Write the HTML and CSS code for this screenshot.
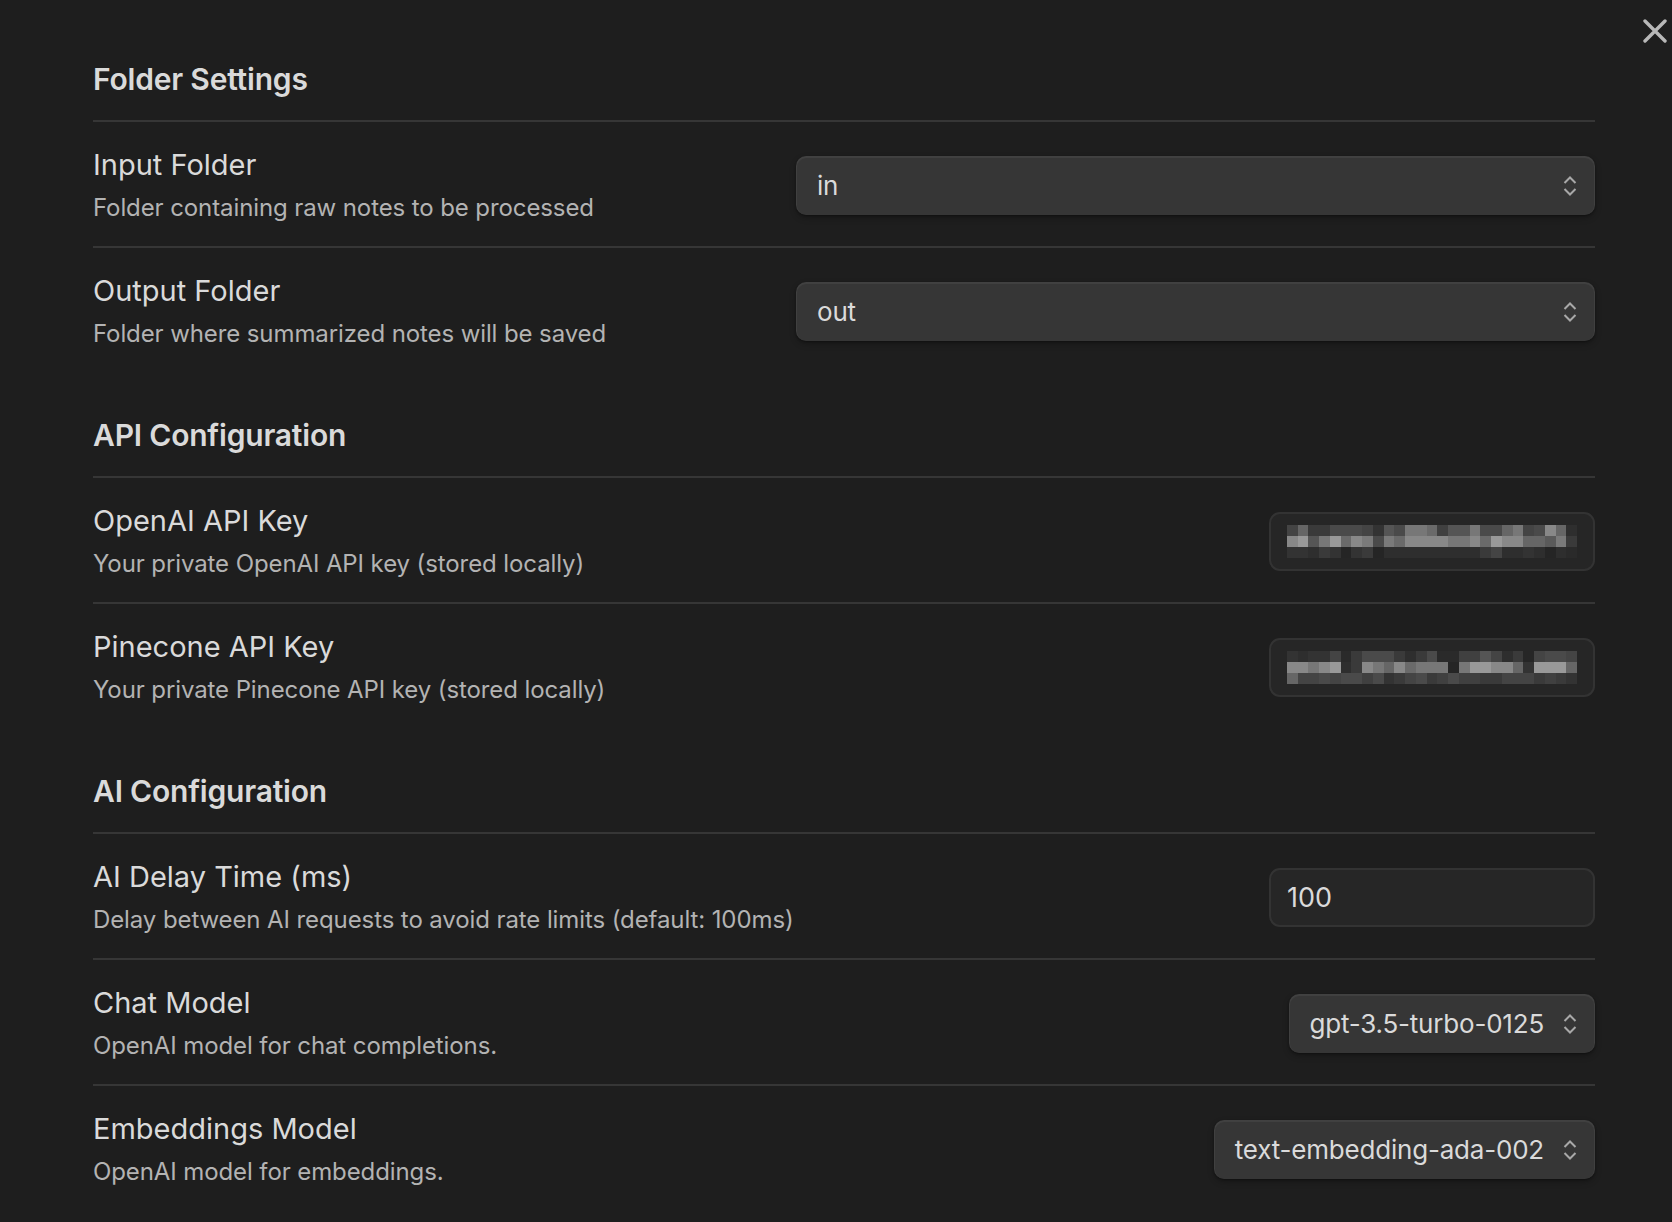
FILE: index.html
```html
<!DOCTYPE html>
<html lang="en">
<head>
<meta charset="utf-8">
<title>Settings</title>
<link rel="stylesheet" href="styles.css">
</head>
<body>
<div class="modal">
  <button class="close" aria-label="Close">
    <svg width="24" height="24" viewBox="0 0 24 24" fill="none" stroke="#b8b8b8" stroke-width="3.4" stroke-linecap="round"><path d="M2 2 L22 22 M22 2 L2 22"/></svg>
  </button>
  <div class="content">
    <div class="heading">Folder Settings</div>
    <div class="item">
      <div class="info"><div class="name">Input Folder</div><div class="desc">Folder containing raw notes to be processed</div></div>
      <div class="dropdown wide"><span>in</span><svg class="chev" width="14" height="22" viewBox="0 0 14 22" fill="none" stroke="#a8a8a8" stroke-width="2"><path d="M1.5 8 L7 2.5 L12.5 8 M1.5 14 L7 19.5 L12.5 14"/></svg></div>
    </div>
    <div class="item">
      <div class="info"><div class="name">Output Folder</div><div class="desc">Folder where summarized notes will be saved</div></div>
      <div class="dropdown wide"><span>out</span><svg class="chev" width="14" height="22" viewBox="0 0 14 22" fill="none" stroke="#a8a8a8" stroke-width="2"><path d="M1.5 8 L7 2.5 L12.5 8 M1.5 14 L7 19.5 L12.5 14"/></svg></div>
    </div>

    <div class="heading">API Configuration</div>
    <div class="item">
      <div class="info"><div class="name">OpenAI API Key</div><div class="desc">Your private OpenAI API key (stored locally)</div></div>
      <div class="textbox masked">
        <svg width="297" height="33" viewBox="0 0 27 3" shape-rendering="crispEdges">
          <g>
            <rect x="0" y="0" width="1" height="1" fill="#444"/><rect x="1" y="0" width="1" height="1" fill="#666"/><rect x="2" y="0" width="1" height="1" fill="#3a3a3a"/><rect x="3" y="0" width="1" height="1" fill="#3a3a3a"/><rect x="4" y="0" width="1" height="1" fill="#4a4a4a"/><rect x="5" y="0" width="1" height="1" fill="#4a4a4a"/><rect x="6" y="0" width="1" height="1" fill="#4a4a4a"/><rect x="7" y="0" width="1" height="1" fill="#444"/><rect x="8" y="0" width="1" height="1" fill="#333"/><rect x="9" y="0" width="1" height="1" fill="#555"/><rect x="10" y="0" width="1" height="1" fill="#4a4a4a"/><rect x="11" y="0" width="1" height="1" fill="#777"/><rect x="12" y="0" width="1" height="1" fill="#777"/><rect x="13" y="0" width="1" height="1" fill="#6a6a6a"/><rect x="14" y="0" width="1" height="1" fill="#404040"/><rect x="15" y="0" width="1" height="1" fill="#555"/><rect x="16" y="0" width="1" height="1" fill="#555"/><rect x="17" y="0" width="1" height="1" fill="#777"/><rect x="18" y="0" width="1" height="1" fill="#4a4a4a"/><rect x="19" y="0" width="1" height="1" fill="#4a4a4a"/><rect x="20" y="0" width="1" height="1" fill="#666"/><rect x="21" y="0" width="1" height="1" fill="#777"/><rect x="22" y="0" width="1" height="1" fill="#444"/><rect x="23" y="0" width="1" height="1" fill="#4a4a4a"/><rect x="24" y="0" width="1" height="1" fill="#888"/><rect x="25" y="0" width="1" height="1" fill="#666"/><rect x="26" y="0" width="1" height="1" fill="#2e2e2e"/>
            <rect x="0" y="1" width="1" height="1" fill="#888"/><rect x="1" y="1" width="1" height="1" fill="#999"/><rect x="2" y="1" width="1" height="1" fill="#555"/><rect x="3" y="1" width="1" height="1" fill="#777"/><rect x="4" y="1" width="1" height="1" fill="#999"/><rect x="5" y="1" width="1" height="1" fill="#6a6a6a"/><rect x="6" y="1" width="1" height="1" fill="#888"/><rect x="7" y="1" width="1" height="1" fill="#7a7a7a"/><rect x="8" y="1" width="1" height="1" fill="#4a4a4a"/><rect x="9" y="1" width="1" height="1" fill="#7a7a7a"/><rect x="10" y="1" width="1" height="1" fill="#6a6a6a"/><rect x="11" y="1" width="1" height="1" fill="#888"/><rect x="12" y="1" width="1" height="1" fill="#888"/><rect x="13" y="1" width="1" height="1" fill="#888"/><rect x="14" y="1" width="1" height="1" fill="#888"/><rect x="15" y="1" width="1" height="1" fill="#777"/><rect x="16" y="1" width="1" height="1" fill="#777"/><rect x="17" y="1" width="1" height="1" fill="#888"/><rect x="18" y="1" width="1" height="1" fill="#6a6a6a"/><rect x="19" y="1" width="1" height="1" fill="#999"/><rect x="20" y="1" width="1" height="1" fill="#888"/><rect x="21" y="1" width="1" height="1" fill="#888"/><rect x="22" y="1" width="1" height="1" fill="#666"/><rect x="23" y="1" width="1" height="1" fill="#666"/><rect x="24" y="1" width="1" height="1" fill="#5a5a5a"/><rect x="25" y="1" width="1" height="1" fill="#7a7a7a"/><rect x="26" y="1" width="1" height="1" fill="#3a3a3a"/>
            <rect x="0" y="2" width="1" height="1" fill="#333"/><rect x="1" y="2" width="1" height="1" fill="#333"/><rect x="2" y="2" width="1" height="1" fill="#2e2e2e"/><rect x="3" y="2" width="1" height="1" fill="#3a3a3a"/><rect x="4" y="2" width="1" height="1" fill="#333"/><rect x="5" y="2" width="1" height="1" fill="#252525"/><rect x="6" y="2" width="1" height="1" fill="#333"/><rect x="7" y="2" width="1" height="1" fill="#3a3a3a"/><rect x="8" y="2" width="1" height="1" fill="#252525"/><rect x="9" y="2" width="1" height="1" fill="#2e2e2e"/><rect x="10" y="2" width="1" height="1" fill="#2e2e2e"/><rect x="11" y="2" width="1" height="1" fill="#2e2e2e"/><rect x="12" y="2" width="1" height="1" fill="#2e2e2e"/><rect x="13" y="2" width="1" height="1" fill="#2e2e2e"/><rect x="14" y="2" width="1" height="1" fill="#2e2e2e"/><rect x="15" y="2" width="1" height="1" fill="#2e2e2e"/><rect x="16" y="2" width="1" height="1" fill="#2e2e2e"/><rect x="17" y="2" width="1" height="1" fill="#2e2e2e"/><rect x="18" y="2" width="1" height="1" fill="#3a3a3a"/><rect x="19" y="2" width="1" height="1" fill="#444"/><rect x="20" y="2" width="1" height="1" fill="#2e2e2e"/><rect x="21" y="2" width="1" height="1" fill="#2e2e2e"/><rect x="22" y="2" width="1" height="1" fill="#333"/><rect x="23" y="2" width="1" height="1" fill="#2e2e2e"/><rect x="24" y="2" width="1" height="1" fill="#252525"/><rect x="25" y="2" width="1" height="1" fill="#2e2e2e"/><rect x="26" y="2" width="1" height="1" fill="#2a2a2a"/>
          </g>
        </svg>
      </div>
    </div>
    <div class="item">
      <div class="info"><div class="name">Pinecone API Key</div><div class="desc">Your private Pinecone API key (stored locally)</div></div>
      <div class="textbox masked">
        <svg width="297" height="33" viewBox="0 0 27 3" shape-rendering="crispEdges">
          <g>
            <rect x="0" y="0" width="1" height="1" fill="#333"/><rect x="1" y="0" width="1" height="1" fill="#2e2e2e"/><rect x="2" y="0" width="1" height="1" fill="#333"/><rect x="3" y="0" width="1" height="1" fill="#333"/><rect x="4" y="0" width="1" height="1" fill="#444"/><rect x="5" y="0" width="1" height="1" fill="#2a2a2a"/><rect x="6" y="0" width="1" height="1" fill="#3a3a3a"/><rect x="7" y="0" width="1" height="1" fill="#4a4a4a"/><rect x="8" y="0" width="1" height="1" fill="#4a4a4a"/><rect x="9" y="0" width="1" height="1" fill="#4a4a4a"/><rect x="10" y="0" width="1" height="1" fill="#3a3a3a"/><rect x="11" y="0" width="1" height="1" fill="#2e2e2e"/><rect x="12" y="0" width="1" height="1" fill="#3a3a3a"/><rect x="13" y="0" width="1" height="1" fill="#4a4a4a"/><rect x="14" y="0" width="1" height="1" fill="#2a2a2a"/><rect x="15" y="0" width="1" height="1" fill="#2a2a2a"/><rect x="16" y="0" width="1" height="1" fill="#404040"/><rect x="17" y="0" width="1" height="1" fill="#404040"/><rect x="18" y="0" width="1" height="1" fill="#555"/><rect x="19" y="0" width="1" height="1" fill="#444"/><rect x="20" y="0" width="1" height="1" fill="#2e2e2e"/><rect x="21" y="0" width="1" height="1" fill="#3a3a3a"/><rect x="22" y="0" width="1" height="1" fill="#262626"/><rect x="23" y="0" width="1" height="1" fill="#444"/><rect x="24" y="0" width="1" height="1" fill="#4a4a4a"/><rect x="25" y="0" width="1" height="1" fill="#4a4a4a"/><rect x="26" y="0" width="1" height="1" fill="#444"/>
            <rect x="0" y="1" width="1" height="1" fill="#888"/><rect x="1" y="1" width="1" height="1" fill="#888"/><rect x="2" y="1" width="1" height="1" fill="#777"/><rect x="3" y="1" width="1" height="1" fill="#888"/><rect x="4" y="1" width="1" height="1" fill="#999"/><rect x="5" y="1" width="1" height="1" fill="#2e2e2e"/><rect x="6" y="1" width="1" height="1" fill="#3a3a3a"/><rect x="7" y="1" width="1" height="1" fill="#888"/><rect x="8" y="1" width="1" height="1" fill="#777"/><rect x="9" y="1" width="1" height="1" fill="#666"/><rect x="10" y="1" width="1" height="1" fill="#888"/><rect x="11" y="1" width="1" height="1" fill="#6a6a6a"/><rect x="12" y="1" width="1" height="1" fill="#777"/><rect x="13" y="1" width="1" height="1" fill="#777"/><rect x="14" y="1" width="1" height="1" fill="#777"/><rect x="15" y="1" width="1" height="1" fill="#252525"/><rect x="16" y="1" width="1" height="1" fill="#777"/><rect x="17" y="1" width="1" height="1" fill="#999"/><rect x="18" y="1" width="1" height="1" fill="#999"/><rect x="19" y="1" width="1" height="1" fill="#888"/><rect x="20" y="1" width="1" height="1" fill="#888"/><rect x="21" y="1" width="1" height="1" fill="#666"/><rect x="22" y="1" width="1" height="1" fill="#333"/><rect x="23" y="1" width="1" height="1" fill="#999"/><rect x="24" y="1" width="1" height="1" fill="#999"/><rect x="25" y="1" width="1" height="1" fill="#999"/><rect x="26" y="1" width="1" height="1" fill="#666"/>
            <rect x="0" y="2" width="1" height="1" fill="#666"/><rect x="1" y="2" width="1" height="1" fill="#444"/><rect x="2" y="2" width="1" height="1" fill="#444"/><rect x="3" y="2" width="1" height="1" fill="#4a4a4a"/><rect x="4" y="2" width="1" height="1" fill="#444"/><rect x="5" y="2" width="1" height="1" fill="#4a4a4a"/><rect x="6" y="2" width="1" height="1" fill="#4a4a4a"/><rect x="7" y="2" width="1" height="1" fill="#404040"/><rect x="8" y="2" width="1" height="1" fill="#4a4a4a"/><rect x="9" y="2" width="1" height="1" fill="#333"/><rect x="10" y="2" width="1" height="1" fill="#3a3a3a"/><rect x="11" y="2" width="1" height="1" fill="#444"/><rect x="12" y="2" width="1" height="1" fill="#4a4a4a"/><rect x="13" y="2" width="1" height="1" fill="#3a3a3a"/><rect x="14" y="2" width="1" height="1" fill="#404040"/><rect x="15" y="2" width="1" height="1" fill="#4a4a4a"/><rect x="16" y="2" width="1" height="1" fill="#404040"/><rect x="17" y="2" width="1" height="1" fill="#404040"/><rect x="18" y="2" width="1" height="1" fill="#3a3a3a"/><rect x="19" y="2" width="1" height="1" fill="#3a3a3a"/><rect x="20" y="2" width="1" height="1" fill="#444"/><rect x="21" y="2" width="1" height="1" fill="#444"/><rect x="22" y="2" width="1" height="1" fill="#444"/><rect x="23" y="2" width="1" height="1" fill="#3a3a3a"/><rect x="24" y="2" width="1" height="1" fill="#404040"/><rect x="25" y="2" width="1" height="1" fill="#3a3a3a"/><rect x="26" y="2" width="1" height="1" fill="#333"/>
          </g>
        </svg>
      </div>
    </div>

    <div class="heading">AI Configuration</div>
    <div class="item">
      <div class="info"><div class="name">AI Delay Time (ms)</div><div class="desc">Delay between AI requests to avoid rate limits (default: 100ms)</div></div>
      <div class="textbox"><span>100</span></div>
    </div>
    <div class="item">
      <div class="info"><div class="name">Chat Model</div><div class="desc">OpenAI model for chat completions.</div></div>
      <div class="dropdown"><span>gpt-3.5-turbo-0125</span><svg class="chev" width="14" height="22" viewBox="0 0 14 22" fill="none" stroke="#a8a8a8" stroke-width="2"><path d="M1.5 8 L7 2.5 L12.5 8 M1.5 14 L7 19.5 L12.5 14"/></svg></div>
    </div>
    <div class="item">
      <div class="info"><div class="name">Embeddings Model</div><div class="desc">OpenAI model for embeddings.</div></div>
      <div class="dropdown"><span>text-embedding-ada-002</span><svg class="chev" width="14" height="22" viewBox="0 0 14 22" fill="none" stroke="#a8a8a8" stroke-width="2"><path d="M1.5 8 L7 2.5 L12.5 8 M1.5 14 L7 19.5 L12.5 14"/></svg></div>
    </div>
  </div>
</div>
</body>
</html>
```
FILE: styles.css
```css
html, body {
  margin: 0;
  padding: 0;
  background: #1e1e1e;
  height: 100%;
  overflow: hidden;
}

body {
  font-family: Inter, "Noto Sans", "Liberation Sans", sans-serif;
  color: #dadada;
}

.modal {
  position: relative;
  min-height: 100%;
}

.close {
  position: absolute;
  top: 18px;
  right: 4px;
  width: 26px;
  height: 26px;
  padding: 0;
  border: 0;
  background: transparent;
  display: flex;
  align-items: center;
  justify-content: center;
}

.content {
  padding: 60px 77px 0 93px;
  display: flex;
  flex-direction: column;
}

.heading {
  font-size: 30px;
  line-height: 36px;
  font-weight: 600;
  color: #dadada;
  padding: 45px 0 23px;
  border-bottom: 2px solid #363636;
  letter-spacing: -0.2px;
}

.heading:first-child {
  padding-top: 1px;
}

.item {
  display: flex;
  align-items: center;
  justify-content: space-between;
  gap: 24px;
  padding: 23px 0 20px;
}

.item + .item {
  border-top: 2px solid #363636;
}

.info {
  display: flex;
  flex-direction: column;
  gap: 5px;
}

.name {
  font-size: 29px;
  line-height: 40px;
  color: #dadada;
}

.desc {
  font-size: 24px;
  line-height: 36px;
  color: #b3b3b3;
  letter-spacing: -0.1px;
}

.dropdown {
  position: relative;
  height: 59px;
  box-sizing: border-box;
  display: flex;
  align-items: center;
  padding: 0 51px 0 21px;
  background: #363636;
  border-radius: 10px;
  font-size: 26px;
  letter-spacing: -0.2px;
  color: #dadada;
  box-shadow: inset 0 1px 1px 1px rgba(255, 255, 255, 0.06), 0 3px 6px rgba(0, 0, 0, 0.25), 0 1px 2px rgba(0, 0, 0, 0.3);
}

.dropdown.wide {
  width: 799px;
}

.chev {
  position: absolute;
  right: 18px;
  top: 50%;
  margin-top: -11px;
}

.textbox {
  width: 326px;
  height: 59px;
  box-sizing: border-box;
  display: flex;
  align-items: center;
  padding: 0 16px;
  background: #262626;
  border: 2px solid #333333;
  border-radius: 11px;
  font-size: 27px;
  color: #dadada;
}

.masked svg {
  display: block;
}
```
